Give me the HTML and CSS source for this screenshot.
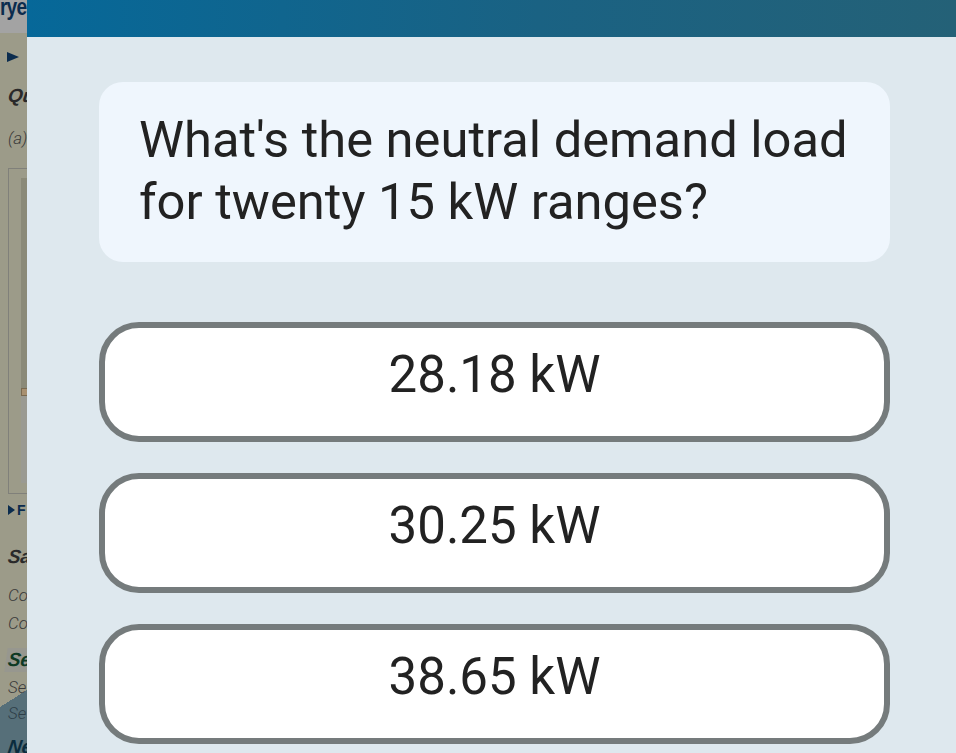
FILE: index.html
```html
<!DOCTYPE html>
<html>
<head>
<meta charset="utf-8">
<link rel="stylesheet" href="styles.css">
</head>
<body>
<div class="page">
  <div class="page-top"><span class="brand">Surye</span></div>
  <div class="page-body">
    <div class="item nav-arrow"><span class="tri"></span></div>
    <div class="item h-bold h-qu">Qu</div>
    <div class="item line-it l-a">(a)</div>
    <div class="figure"><div class="figure-inner"><span class="fig-mark"></span></div></div>
    <div class="item nav-arrow2"><span class="tri-sm"></span><b>F</b></div>
    <div class="item h-bold h-sa">Sa</div>
    <div class="item line-it l-co1">Co</div>
    <div class="item line-it l-co2">Co</div>
    <div class="item h-bold h-se">Se</div>
    <div class="item line-it l-se1">Se</div>
    <div class="item line-it l-se2">Se</div>
    <div class="item h-bold h-ne">Ne</div>
  </div>
</div>
<div class="sheet">
  <div class="sheet-header"></div>
  <div class="sheet-content">
    <div class="question">What's the neutral demand load for twenty 15 kW ranges?</div>
    <div class="options">
      <div class="option"><span>28.18 kW</span></div>
      <div class="option"><span>30.25 kW</span></div>
      <div class="option"><span>38.65 kW</span></div>
    </div>
  </div>
</div>
</body>
</html>
```
FILE: styles.css
```css
html, body {
  margin: 0;
  padding: 0;
  width: 956px;
  height: 753px;
  overflow: hidden;
  font-family: Roboto, "Liberation Sans", sans-serif;
}
.page {
  width: 956px;
  height: 753px;
  overflow: hidden;
  background:
    linear-gradient(to bottom right, transparent 50%, #566f79 50%) no-repeat 0 673px / 54px 34px,
    linear-gradient(#566f79, #566f79) no-repeat 0 707px / 100% 46px,
    #9c9b89;
}
.page-top {
  height: 33px;
  background: #a3a3a3;
  overflow: hidden;
}
.brand {
  display: block;
  margin-left: -23px;
  margin-top: -5px;
  font-family: "Liberation Sans", sans-serif;
  font-weight: 700;
  font-size: 24px;
  line-height: 24px;
  color: #0b2c4e;
  letter-spacing: -1px;
  transform: scaleX(0.8);
  transform-origin: left top;
}
.page-body {
  padding-left: 8px;
  display: flex;
  flex-direction: column;
  align-items: flex-start;
}
.item {
  flex: none;
  white-space: nowrap;
}
.nav-arrow {
  margin-top: 19px;
  margin-left: -1px;
  height: 11px;
}
.tri {
  display: block;
  width: 0;
  height: 0;
  border-left: 12px solid #0b2c4e;
  border-top: 5.5px solid transparent;
  border-bottom: 5.5px solid transparent;
}
.h-bold {
  font-family: "Liberation Sans", sans-serif;
  font-weight: 700;
  font-style: italic;
  font-size: 19px;
  line-height: 22px;
  height: 22px;
  color: #2a2a2a;
  transform: skewX(-8deg);
}
.line-it {
  font-style: italic;
  font-weight: 300;
  font-size: 17px;
  line-height: 20px;
  height: 20px;
  color: #3a3a3a;
}
.h-qu { margin-top: 22px; }
.l-a { margin-top: 21px; }
.figure {
  flex: none;
  margin-top: 20px;
  width: 40px;
  height: 326px;
  border: 1.5px solid #80807a;
  box-sizing: border-box;
  padding: 9px 0 10px 12px;
}
.figure-inner {
  height: 100%;
  background: linear-gradient(#8b8a78 0, #8b8a78 210px, #9a9a92 211px);
  position: relative;
}
.fig-mark {
  position: absolute;
  left: 0;
  top: 210px;
  width: 6px;
  height: 6px;
  border: 1px solid #7a6a50;
  background: #a89070;
}
.nav-arrow2 {
  margin-top: 8px;
  height: 16px;
  display: flex;
  align-items: center;
  gap: 2px;
}
.tri-sm {
  display: block;
  width: 0;
  height: 0;
  border-left: 7px solid #0b2c4e;
  border-top: 5px solid transparent;
  border-bottom: 5px solid transparent;
}
.nav-arrow2 b {
  font-family: "Liberation Sans", sans-serif;
  font-size: 14px;
  line-height: 16px;
  color: #0b2c4e;
}
.h-sa { margin-top: 28px; }
.l-co1 { margin-top: 17px; }
.l-co2 { margin-top: 8px; }
.h-se {
  margin-top: 15px;
  margin-left: -2px;
  padding-left: 2px;
  line-height: 24px;
  height: 24px;
  color: #0f3a24;
  background: #97978f;
  width: 30px;
}
.l-se1 { margin-top: 5px; }
.l-se2 { margin-top: 6px; color: #2e3e48; }
.h-ne { margin-top: 13px; color: #0b2c3e; }

.sheet {
  position: absolute;
  left: 27px;
  top: 0;
  width: 929px;
  height: 753px;
  background: #dee8ee;
  display: flex;
  flex-direction: column;
}
.sheet-header {
  height: 37px;
  flex: none;
  background: linear-gradient(90deg, #066899 0%, #1a6283 55%, #246177 100%);
}
.sheet-content {
  padding: 45px 66px 0 72px;
  display: flex;
  flex-direction: column;
}
.question {
  background: #eff6fd;
  border-radius: 24px;
  padding: 27px 30px 29px 40px;
  font-size: 50.7px;
  line-height: 62px;
  color: #222;
}
.options {
  margin-top: 60px;
  display: flex;
  flex-direction: column;
  gap: 31px;
}
.option {
  height: 120px;
  box-sizing: border-box;
  border: 6px solid #757b7c;
  border-radius: 40px;
  background: #fff;
  display: flex;
  align-items: center;
  justify-content: center;
  padding-bottom: 15px;
  font-size: 51px;
  line-height: 1;
  color: #222;
}
```
